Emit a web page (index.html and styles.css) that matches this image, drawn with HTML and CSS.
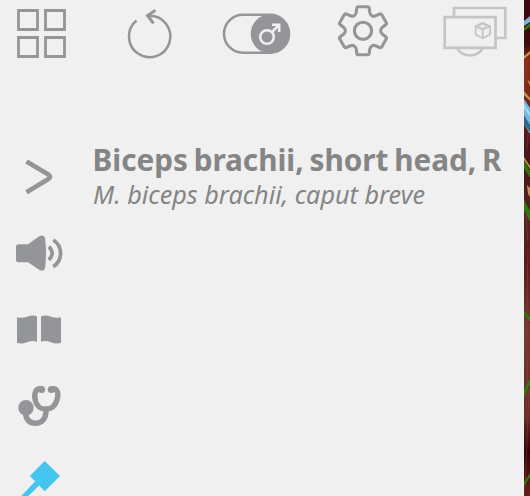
FILE: index.html
```
<!DOCTYPE html>
<html lang="en">
<head>
<meta charset="utf-8">
<title>Muscle details</title>
<link rel="stylesheet" href="styles.css">
</head>
<body>
<div class="app">
  <main class="panel">
    <nav class="toolbar">
      <svg class="icon" viewBox="0 0 96 64"><g class="line grid-line"><path d="M18.500 10.500h19v19h-19zM45.500 10.500h19v19h-19zM18.500 37.500h19v19h-19zM45.500 37.500h19v19h-19z"/></g></svg>
      <svg class="icon" viewBox="96 0 105 64"><path class="line thin" d="M136.500 20.500A20.700 20.700 0 1 0 149 15.800"/><path class="line arrow" d="M155.500 10.200L147.500 15.500L153.500 23.300"/></svg>
      <svg class="icon" viewBox="201 0 115 64"><rect class="line thin" x="224" y="14.800" width="65" height="38" rx="19"/><circle class="solid" cx="270.300" cy="33.800" r="19.600"/><g class="symbol"><circle cx="267" cy="37" r="6.800"/><path d="M272 32L278.500 25.500M272 24.700H279.200V32"/></g></svg>
      <svg class="icon" viewBox="316 0 98 64"><g class="line gear" transform="translate(363 30.800)"><path d="M-4.500 -24H4.500Q6 -24 6.200 -22.500L6.800 -18.300C7.500 -15 10 -14 12.500 -15L16.500 -16.700Q18 -17.300 18.800 -16L23.200 -8.300Q24 -7 22.700 -6L19.500 -3.500C17 -1.500 17 1.500 19.500 3.500L22.700 6Q24 7 23.200 8.300L18.800 16Q18 17.300 16.500 16.700L12.500 15C10 14 7.500 15 6.800 18.300L6.200 22.500Q6 24 4.500 24H-4.500Q-6 24 -6.200 22.500L-6.800 18.300C-7.500 15 -10 14 -12.500 15L-16.500 16.700Q-18 17.300 -18.800 16L-23.200 8.300Q-24 7 -22.700 6L-19.500 3.500C-17 1.500 -17 -1.500 -19.500 -3.500L-22.700 -6Q-24 -7 -23.200 -8.300L-18.800 -16Q-18 -17.300 -16.500 -16.700L-12.500 -15C-10 -14 -7.500 -15 -6.800 -18.300L-6.200 -22.500Q-6 -24 -4.500 -24Z"/><circle r="8.600"/></g></svg>
      <svg class="icon" viewBox="414 0 110 64"><g class="disabled"><path d="M454 16V8H505.300V38H497M444.700 17.200H495.500V47.800H444.700Z"/><path d="M457.500 49Q462 55.300 470 55.300Q478 55.300 482.500 49"/><path class="cube" d="M482.700 22.800L490 26.300V34.500L482.700 38.300L475.600 34.500V26.300ZM475.600 26.300L482.700 29.700L490 26.300M482.700 29.700V38"/><path class="cube-face" d="M478.500 26.200L482.700 24.200L487 26.200L482.700 28.300Z"/></g></svg>
    </nav>
    <div class="body">
      <aside class="tools">
        <svg class="icon" viewBox="0 139 80 76"><path class="line chevron" d="M26.500 161.500L48 174.300Q52 176.800 48 179.300L26.500 192.200"/></svg>
        <svg class="icon" viewBox="0 215 80 76"><path class="solid" d="M18.500 244.300H28L39.300 236.300Q44 234 45 238Q47 253 45 268.500Q43.500 272 39.500 270L28 262.300H18.500Q16 262.300 16 259.800V246.800Q16 244.300 18.500 244.300Z"/><path class="line wave" d="M48.800 246.700Q55.500 253.200 48.800 259.900M53.200 240C63 246 63 260.800 53.200 266.600"/></svg>
        <svg class="icon" viewBox="0 291 80 76"><path class="solid" d="M17 317.200Q22 318.600 27 316.800Q32.500 314.400 37 316.300V341.700Q32 340.200 27 342.200Q21.500 344.400 17 342.800ZM41 316.300Q46 314.400 51 316.800Q56 318.600 61 317.200V342.800Q56 344.400 51 342.200Q46 340.200 41 341.700Z"/></svg>
        <svg class="icon" viewBox="0 367 80 76"><circle class="solid" cx="26" cy="407.800" r="7.700"/><circle class="solid" cx="41.500" cy="389.500" r="3.600"/><circle class="solid" cx="51.300" cy="389.500" r="3.600"/><g class="line tube"><path d="M41 388.800C35 388.500 33.700 394 35.500 401C37.300 407.200 40.500 409 46 409C52 409 55.200 406 57 400C59 392 57.300 388 51.500 388.800"/><path d="M46 409C46.300 419 42 423.300 35.300 423.300C29.500 423.300 26 420 25.300 412"/></g></svg>
        <svg class="icon active" viewBox="0 443 80 76"><path d="M44.700 461L60 476L44.700 491.300L29.800 476Z"/><path d="M35.500 481L39.500 485L25 499.500H18Z"/></svg>
      </aside>
      <header class="details">
        <svg class="names" viewBox="80 139 444 80" role="img"><text class="title" x="92.500" y="171.300" textLength="409" lengthAdjust="spacingAndGlyphs">Biceps brachii, short head, R</text><text class="latin" x="93" y="203.500" textLength="332" lengthAdjust="spacingAndGlyphs">M. biceps brachii, caput breve</text></svg>
      </header>
    </div>
  </main>
  <svg class="anatomy" viewBox="0 0 6 496" preserveAspectRatio="none">
    <defs><linearGradient id="muscle" x1="0" y1="0" x2="0" y2="1"><stop offset="0" stop-color="#3e0810"/><stop offset=".09" stop-color="#3c0b0a"/><stop offset=".12" stop-color="#8a2b12"/><stop offset=".19" stop-color="#7c2816"/><stop offset=".3" stop-color="#49131a"/><stop offset=".43" stop-color="#542421"/><stop offset=".53" stop-color="#591b19"/><stop offset=".67" stop-color="#713931"/><stop offset=".84" stop-color="#652b25"/><stop offset=".91" stop-color="#350305"/><stop offset="1" stop-color="#67201b"/></linearGradient></defs>
    <rect width="6" height="496" fill="url(#muscle)"/>
    <path class="fiber" d="M1 200L4 242M4 250L2 350M4 350L2 420M5 390L1 490M3 60L1 90M5 120L3 150"/>
    <path class="blue" d="M0 21L6 16V22L0 26Z"/><path class="green" d="M0 28L6 23V27L0 31Z"/>
    <path class="gold" d="M0 56L6 51V54L0 59ZM3 79L6 82V86ZM0 91L6 98V101L0 95Z"/>
    <path class="blue" d="M0 99L6 108V134L0 124Z"/><path class="deep-blue" d="M0 115L6 125V132L0 124Z"/><path class="ice" d="M0 104L6 113V117L0 108Z"/>
    <path class="gold" d="M0 157L6 166V169L0 160ZM3 185L6 188V197L4 194Z"/>
    <path class="green" d="M0 161L6 171V178L0 168ZM0 200L6 211V222L0 210ZM0 311L6 317V321L0 315ZM0 390L6 378V384L0 398ZM0 482L6 473V477L0 486Z"/>
  </svg>
</div>
</body>
</html>
```
FILE: styles.css
```
* { box-sizing: border-box; }
body { margin: 0; overflow: hidden; background: #f0f0f0; }
.app { display: flex; width: 530px; height: 496px; overflow: hidden; }
.panel { width: 524px; background: #f0f0f0; }
.toolbar { display: grid; grid-template-columns: 96px 105px 115px 98px 110px; height: 64px; }
.body { display: flex; margin-top: 75px; }
.tools { display: grid; width: 80px; grid-auto-rows: 76px; }
.details { flex: 1; }
.icon { display: block; width: 100%; height: 100%; }
.names { display: block; width: 444px; height: 80px; }
.title { font: 700 30.5px "Noto Sans", "Open Sans", sans-serif; word-spacing: -2px; fill: #858585; }
.latin { font: italic 400 26px "Noto Sans", "Open Sans", sans-serif; fill: #858585; }
.line { fill: none; stroke: #939598; stroke-width: 2.7; }
.thin { stroke-width: 2.5; }
.arrow { stroke-width: 3; }
.grid-line { stroke-width: 2.8; }
.gear { stroke-width: 3.1; stroke-linejoin: round; }
.solid { fill: #939598; }
.symbol { fill: none; stroke: #f0f0f0; stroke-width: 2.5; }
.chevron { stroke-width: 4.8; }
.wave { stroke-width: 3.8; }
.tube { stroke-width: 5.4; }
.disabled { fill: none; stroke: #c5c5c5; stroke-width: 2.7; }
.cube { stroke-width: 1.8; }
.cube-face { stroke-width: 1; }
.active { fill: #45c5ee; }
.anatomy { display: block; width: 6px; height: 496px; }
.fiber { fill: none; stroke: #935047; stroke-width: .7; opacity: .6; }
.blue { fill: #78b7d9; }
.deep-blue { fill: #28698f; }
.ice { fill: #9edbf7; }
.green { fill: #30780e; }
.gold { fill: #c2964c; }
```
